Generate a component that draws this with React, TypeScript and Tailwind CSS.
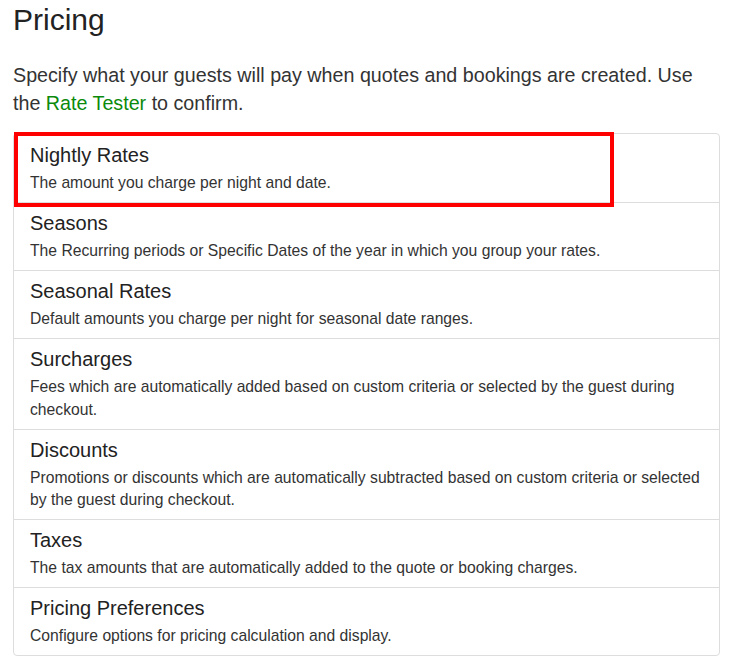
const items = [
  { title: 'Nightly Rates', desc: 'The amount you charge per night and date.' },
  { title: 'Seasons', desc: 'The Recurring periods or Specific Dates of the year in which you group your rates.' },
  { title: 'Seasonal Rates', desc: 'Default amounts you charge per night for seasonal date ranges.' },
  { title: 'Surcharges', desc: 'Fees which are automatically added based on custom criteria or selected by the guest during checkout.' },
  { title: 'Discounts', desc: 'Promotions or discounts which are automatically subtracted based on custom criteria or selected by the guest during checkout.' },
  { title: 'Taxes', desc: 'The tax amounts that are automatically added to the quote or booking charges.' },
  { title: 'Pricing Preferences', desc: 'Configure options for pricing calculation and display.' },
]

export default function App() {
  return (
    <div className="min-h-screen bg-white px-[13px] pt-[2px] text-[#333] font-['Liberation_Sans',Arial,sans-serif]">
      <h1 className="text-[30px] leading-[36px] text-[#222]">Pricing</h1>
      <p className="mt-[23px] text-[19.7px] leading-[28px] pr-[20px]">
        Specify what your guests will pay when quotes and bookings are created. Use the <a href="#" className="text-[#0b8a0b]">Rate Tester</a> to confirm.
      </p>

      <div className="relative mt-[16px] mr-[-1px] rounded-[4px] border border-[#dddddd]">
        {items.map((item, i) => (
          <div
            key={item.title}
            className={`px-[16px] pb-[7.5px] ${i > 0 ? 'pt-[8px] border-t border-[#dddddd]' : 'pt-[9px]'}`}
          >
            <h4 className="text-[20px] leading-[24px] text-[#222]">{item.title}</h4>
            <p className="mt-[5px] text-[15.7px] leading-[22.5px]">{item.desc}</p>
          </div>
        ))}

        {/* highlight annotation */}
        <div className="pointer-events-none absolute left-0 top-[-2px] h-[75px] w-[600px] border-[4px] border-[#ff0000]" />
      </div>
    </div>
  )
}
